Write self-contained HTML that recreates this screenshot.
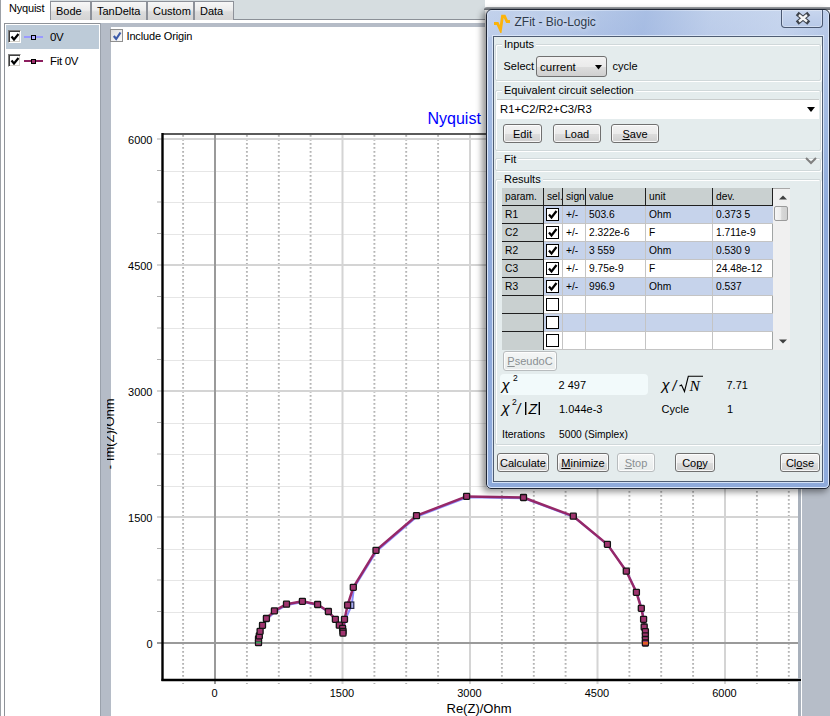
<!DOCTYPE html>
<html><head><meta charset="utf-8">
<style>
*{box-sizing:border-box}
html,body{margin:0;padding:0}
body{width:830px;height:716px;overflow:hidden;position:relative;background:#fff;font-family:"Liberation Sans",sans-serif;font-size:11px;color:#000}
.a{position:absolute}
.tab{position:absolute;top:1px;height:19px;border:1px solid #8d9199;border-bottom:none;background:linear-gradient(#f7f7f7 0%,#ececec 45%,#dcdcdc 55%,#d4d4d4 100%);}
.tab span{position:absolute;top:3px;left:5px;font-size:11px}
.tl{font-size:11px;fill:#000;font-family:"Liberation Sans",sans-serif}
.ax{font-size:13px;fill:#000;font-family:"Liberation Sans",sans-serif}
.ttl{font-size:16px;fill:#0000ff;font-family:"Liberation Sans",sans-serif}
.cb{position:absolute;width:13px;height:13px;background:#fff;border:1px solid;border-color:#808080 #fff #fff #808080;box-shadow:inset 1px 1px 0 #404040, inset -1px -1px 0 #d4d0c8}
.btn{position:absolute;height:19px;border:1px solid #707070;border-radius:3px;background:linear-gradient(#f2f2f2 0%,#ebebeb 50%,#dddddd 51%,#cfcfcf 100%);box-shadow:inset 0 0 0 1px rgba(255,255,255,0.8);text-align:center;font-size:11px;line-height:18px}
.grp{position:absolute;border:1px solid #d0d8da;border-radius:2px;box-shadow:1px 1px 0 #fff inset, 1px 1px 0 #fff}
.glab{position:absolute;background:#e4eced;padding:0 2px;font-size:11px;line-height:12px}
table.res{position:absolute;border-collapse:collapse;font-size:11px}
</style></head><body>

<!-- left edge -->
<div class="a" style="left:0;top:0;width:1px;height:716px;background:#9ca0a6"></div>

<!-- tab strip -->
<div class="a" style="left:50px;top:0;width:435px;height:19px;background:#d6dde0"></div>
<div class="a" style="left:50px;top:19px;width:435px;height:1px;background:#8b9097"></div>
<div class="tab" style="left:50px;width:41px"><span>Bode</span></div>
<div class="tab" style="left:91px;width:56px"><span>TanDelta</span></div>
<div class="tab" style="left:147px;width:47px"><span>Custom</span></div>
<div class="tab" style="left:194px;width:40px"><span>Data</span></div>
<div class="a" style="left:9px;top:2px;font-size:11px;letter-spacing:-0.2px">Nyquist</div>

<!-- listbox -->
<div class="a" style="left:4px;top:23px;width:97px;height:700px;border:1px solid #8e9298;border-right:none;background:#fff"></div>
<div class="a" style="left:6px;top:25px;width:93px;height:24px;background:#bdcbd8"></div>
<div class="cb" style="left:8px;top:30px"></div>
<div class="cb" style="left:8px;top:54px"></div>
<svg class="a" style="left:10px;top:32px" width="10" height="10"><path d="M1.5 4.5 L4 7.5 L8.5 2" fill="none" stroke="#000" stroke-width="2.2"/></svg>
<svg class="a" style="left:10px;top:56px" width="10" height="10"><path d="M1.5 4.5 L4 7.5 L8.5 2" fill="none" stroke="#000" stroke-width="2.2"/></svg>
<div class="a" style="left:24px;top:36px;width:19px;height:2px;background:#9a9aff"></div>
<div class="a" style="left:31px;top:35px;width:5px;height:5px;border:1px solid #000;background:#b0b0ff"></div>
<div class="a" style="left:24px;top:60px;width:19px;height:2px;background:#8c1e5e"></div>
<div class="a" style="left:31px;top:59px;width:5px;height:5px;border:1px solid #000;background:#a0306e"></div>
<div class="a" style="left:50px;top:31px;font-size:11.5px;letter-spacing:-0.3px">0V</div>
<div class="a" style="left:50px;top:55px;font-size:11.5px;letter-spacing:-0.3px">Fit 0V</div>

<!-- strips -->
<div class="a" style="left:100px;top:23px;width:11px;height:693px;background:#b5bcc7;border-left:1px solid #9aa1ab"></div>
<div class="a" style="left:111px;top:23px;width:374px;height:4px;background:#b5bcc7"></div>
<svg class="a" style="left:0;top:0" width="830" height="716" viewBox="0 0 830 716">
<line x1="183.1" y1="135" x2="183.1" y2="684" stroke="#b4b4b4" stroke-width="1.9" stroke-dasharray="1.7 2.3"/>
<line x1="246.9" y1="135" x2="246.9" y2="684" stroke="#b4b4b4" stroke-width="1.9" stroke-dasharray="1.7 2.3"/>
<line x1="278.8" y1="135" x2="278.8" y2="684" stroke="#b4b4b4" stroke-width="1.9" stroke-dasharray="1.7 2.3"/>
<line x1="310.6" y1="135" x2="310.6" y2="684" stroke="#b4b4b4" stroke-width="1.9" stroke-dasharray="1.7 2.3"/>
<line x1="374.4" y1="135" x2="374.4" y2="684" stroke="#b4b4b4" stroke-width="1.9" stroke-dasharray="1.7 2.3"/>
<line x1="406.2" y1="135" x2="406.2" y2="684" stroke="#b4b4b4" stroke-width="1.9" stroke-dasharray="1.7 2.3"/>
<line x1="438.1" y1="135" x2="438.1" y2="684" stroke="#b4b4b4" stroke-width="1.9" stroke-dasharray="1.7 2.3"/>
<line x1="501.9" y1="135" x2="501.9" y2="684" stroke="#b4b4b4" stroke-width="1.9" stroke-dasharray="1.7 2.3"/>
<line x1="533.8" y1="135" x2="533.8" y2="684" stroke="#b4b4b4" stroke-width="1.9" stroke-dasharray="1.7 2.3"/>
<line x1="565.6" y1="135" x2="565.6" y2="684" stroke="#b4b4b4" stroke-width="1.9" stroke-dasharray="1.7 2.3"/>
<line x1="629.4" y1="135" x2="629.4" y2="684" stroke="#b4b4b4" stroke-width="1.9" stroke-dasharray="1.7 2.3"/>
<line x1="661.2" y1="135" x2="661.2" y2="684" stroke="#b4b4b4" stroke-width="1.9" stroke-dasharray="1.7 2.3"/>
<line x1="693.1" y1="135" x2="693.1" y2="684" stroke="#b4b4b4" stroke-width="1.9" stroke-dasharray="1.7 2.3"/>
<line x1="756.9" y1="135" x2="756.9" y2="684" stroke="#b4b4b4" stroke-width="1.9" stroke-dasharray="1.7 2.3"/>
<line x1="788.8" y1="135" x2="788.8" y2="684" stroke="#b4b4b4" stroke-width="1.9" stroke-dasharray="1.7 2.3"/>
<line x1="162.5" y1="612.5" x2="800" y2="612.5" stroke="#cccccc" stroke-width="1" stroke-dasharray="1 1"/>
<line x1="157" y1="611.5" x2="161" y2="611.5" stroke="#b0b0b0" stroke-width="1"/>
<line x1="162.5" y1="580.5" x2="800" y2="580.5" stroke="#cccccc" stroke-width="1" stroke-dasharray="1 1"/>
<line x1="157" y1="580.0" x2="161" y2="580.0" stroke="#b0b0b0" stroke-width="1"/>
<line x1="162.5" y1="549.5" x2="800" y2="549.5" stroke="#cccccc" stroke-width="1" stroke-dasharray="1 1"/>
<line x1="157" y1="548.5" x2="161" y2="548.5" stroke="#b0b0b0" stroke-width="1"/>
<line x1="162.5" y1="486.5" x2="800" y2="486.5" stroke="#cccccc" stroke-width="1" stroke-dasharray="1 1"/>
<line x1="157" y1="485.5" x2="161" y2="485.5" stroke="#b0b0b0" stroke-width="1"/>
<line x1="162.5" y1="454.5" x2="800" y2="454.5" stroke="#cccccc" stroke-width="1" stroke-dasharray="1 1"/>
<line x1="157" y1="454.0" x2="161" y2="454.0" stroke="#b0b0b0" stroke-width="1"/>
<line x1="162.5" y1="423.5" x2="800" y2="423.5" stroke="#cccccc" stroke-width="1" stroke-dasharray="1 1"/>
<line x1="157" y1="422.5" x2="161" y2="422.5" stroke="#b0b0b0" stroke-width="1"/>
<line x1="162.5" y1="360.5" x2="800" y2="360.5" stroke="#cccccc" stroke-width="1" stroke-dasharray="1 1"/>
<line x1="157" y1="359.5" x2="161" y2="359.5" stroke="#b0b0b0" stroke-width="1"/>
<line x1="162.5" y1="328.5" x2="800" y2="328.5" stroke="#cccccc" stroke-width="1" stroke-dasharray="1 1"/>
<line x1="157" y1="328.0" x2="161" y2="328.0" stroke="#b0b0b0" stroke-width="1"/>
<line x1="162.5" y1="297.5" x2="800" y2="297.5" stroke="#cccccc" stroke-width="1" stroke-dasharray="1 1"/>
<line x1="157" y1="296.5" x2="161" y2="296.5" stroke="#b0b0b0" stroke-width="1"/>
<line x1="162.5" y1="234.5" x2="800" y2="234.5" stroke="#cccccc" stroke-width="1" stroke-dasharray="1 1"/>
<line x1="157" y1="233.5" x2="161" y2="233.5" stroke="#b0b0b0" stroke-width="1"/>
<line x1="162.5" y1="202.5" x2="800" y2="202.5" stroke="#cccccc" stroke-width="1" stroke-dasharray="1 1"/>
<line x1="157" y1="202.0" x2="161" y2="202.0" stroke="#b0b0b0" stroke-width="1"/>
<line x1="162.5" y1="171.5" x2="800" y2="171.5" stroke="#cccccc" stroke-width="1" stroke-dasharray="1 1"/>
<line x1="157" y1="170.5" x2="161" y2="170.5" stroke="#b0b0b0" stroke-width="1"/>
<line x1="342.5" y1="134" x2="342.5" y2="684" stroke="#d4d4d4" stroke-width="2"/>
<line x1="470.0" y1="134" x2="470.0" y2="684" stroke="#d4d4d4" stroke-width="2"/>
<line x1="597.5" y1="134" x2="597.5" y2="684" stroke="#d4d4d4" stroke-width="2"/>
<line x1="725.0" y1="134" x2="725.0" y2="684" stroke="#d4d4d4" stroke-width="2"/>
<line x1="157" y1="517.0" x2="800" y2="517.0" stroke="#d4d4d4" stroke-width="2"/>
<line x1="157" y1="391.0" x2="800" y2="391.0" stroke="#d4d4d4" stroke-width="2"/>
<line x1="157" y1="265.0" x2="800" y2="265.0" stroke="#d4d4d4" stroke-width="2"/>
<line x1="157" y1="139.0" x2="800" y2="139.0" stroke="#d4d4d4" stroke-width="2"/>
<line x1="215.0" y1="134" x2="215.0" y2="684" stroke="#9a9a9a" stroke-width="2"/>
<line x1="157" y1="643.0" x2="800" y2="643.0" stroke="#9a9a9a" stroke-width="2"/>
<line x1="162.5" y1="134" x2="800" y2="134" stroke="#5a5a5a" stroke-width="2"/>
<line x1="162.5" y1="133" x2="162.5" y2="681" stroke="#000" stroke-width="2.4"/>
<line x1="161.5" y1="680" x2="800" y2="680" stroke="#000" stroke-width="2.4"/>
<text x="152.5" y="648.0" text-anchor="end" class="tl">0</text>
<text x="214.5" y="697" text-anchor="middle" class="tl">0</text>
<text x="152.5" y="522.0" text-anchor="end" class="tl">1500</text>
<text x="342.0" y="697" text-anchor="middle" class="tl">1500</text>
<text x="152.5" y="396.0" text-anchor="end" class="tl">3000</text>
<text x="469.5" y="697" text-anchor="middle" class="tl">3000</text>
<text x="152.5" y="270.0" text-anchor="end" class="tl">4500</text>
<text x="597.0" y="697" text-anchor="middle" class="tl">4500</text>
<text x="152.5" y="144.0" text-anchor="end" class="tl">6000</text>
<text x="724.5" y="697" text-anchor="middle" class="tl">6000</text>
<text x="479" y="712.8" text-anchor="middle" class="ax">Re(Z)/Ohm</text>
<text x="427.5" y="123.6" class="ttl">Nyquist</text>
<polyline fill="none" stroke="#8c8cff" stroke-width="2" points="259.1,643.5 259.1,639.8 259.9,636.6 260.7,632.2 263.1,626.2 267.0,619.3 275.0,611.7 287.1,605.0 303.0,602.1 318.2,605.3 329.0,612.3 336.0,620.2 339.9,626.0 343.2,629.2 343.6,632.1 343.6,633.9 345.1,620.2 351.7,605.2 353.9,588.1 376.6,551.2 417.1,516.5 467.2,497.2 524.1,498.3 573.9,517.0 608.0,545.2 626.9,572.0 637.0,593.1 641.9,609.2 644.2,620.1 644.8,627.8 646.0,632.5 646.0,636.6 646.0,640.3 646.0,643.8"/>
<rect x="347.4" y="602" width="6.4" height="6.4" fill="#a8acf4" stroke="#28284a" stroke-width="1.2"/>
<polyline fill="none" stroke="#962868" stroke-width="2.5" stroke-linejoin="round" points="258.5,642.7 258.5,639.0 259.3,635.8 260.1,631.4 262.5,625.4 266.4,618.5 274.4,610.9 286.5,604.2 302.4,601.3 317.6,604.5 328.4,611.5 335.4,619.4 339.3,625.2 342.6,628.4 343.0,631.3 343.0,633.1 344.5,619.4 347.6,605.2 353.3,587.3 376.0,550.4 416.5,515.7 466.6,496.4 523.5,497.5 573.3,516.2 607.4,544.4 626.3,571.2 636.4,592.3 641.3,608.4 643.6,619.3 644.2,627.0 645.4,631.7 645.4,635.8 645.4,639.5 645.4,643.0"/>
<rect x="255.5" y="639.7" width="6" height="6" fill="#a0346f" stroke="#141414" stroke-width="1.3" rx="0.8"/>
<rect x="255.5" y="636.0" width="6" height="6" fill="#a0346f" stroke="#141414" stroke-width="1.3" rx="0.8"/>
<rect x="256.3" y="632.8" width="6" height="6" fill="#a0346f" stroke="#141414" stroke-width="1.3" rx="0.8"/>
<rect x="257.1" y="628.4" width="6" height="6" fill="#a0346f" stroke="#141414" stroke-width="1.3" rx="0.8"/>
<rect x="259.5" y="622.4" width="6" height="6" fill="#a0346f" stroke="#141414" stroke-width="1.3" rx="0.8"/>
<rect x="263.4" y="615.5" width="6" height="6" fill="#a0346f" stroke="#141414" stroke-width="1.3" rx="0.8"/>
<rect x="271.4" y="607.9" width="6" height="6" fill="#a0346f" stroke="#141414" stroke-width="1.3" rx="0.8"/>
<rect x="283.5" y="601.2" width="6" height="6" fill="#a0346f" stroke="#141414" stroke-width="1.3" rx="0.8"/>
<rect x="299.4" y="598.3" width="6" height="6" fill="#a0346f" stroke="#141414" stroke-width="1.3" rx="0.8"/>
<rect x="314.6" y="601.5" width="6" height="6" fill="#a0346f" stroke="#141414" stroke-width="1.3" rx="0.8"/>
<rect x="325.4" y="608.5" width="6" height="6" fill="#a0346f" stroke="#141414" stroke-width="1.3" rx="0.8"/>
<rect x="332.4" y="616.4" width="6" height="6" fill="#a0346f" stroke="#141414" stroke-width="1.3" rx="0.8"/>
<rect x="336.3" y="622.2" width="6" height="6" fill="#a0346f" stroke="#141414" stroke-width="1.3" rx="0.8"/>
<rect x="339.6" y="625.4" width="6" height="6" fill="#a0346f" stroke="#141414" stroke-width="1.3" rx="0.8"/>
<rect x="340.0" y="628.3" width="6" height="6" fill="#a0346f" stroke="#141414" stroke-width="1.3" rx="0.8"/>
<rect x="340.0" y="630.1" width="6" height="6" fill="#a0346f" stroke="#141414" stroke-width="1.3" rx="0.8"/>
<rect x="341.5" y="616.4" width="6" height="6" fill="#a0346f" stroke="#141414" stroke-width="1.3" rx="0.8"/>
<rect x="344.6" y="602.2" width="6" height="6" fill="#a0346f" stroke="#141414" stroke-width="1.3" rx="0.8"/>
<rect x="350.3" y="584.3" width="6" height="6" fill="#a0346f" stroke="#141414" stroke-width="1.3" rx="0.8"/>
<rect x="373.0" y="547.4" width="6" height="6" fill="#a0346f" stroke="#141414" stroke-width="1.3" rx="0.8"/>
<rect x="413.5" y="512.7" width="6" height="6" fill="#a0346f" stroke="#141414" stroke-width="1.3" rx="0.8"/>
<rect x="463.6" y="493.4" width="6" height="6" fill="#a0346f" stroke="#141414" stroke-width="1.3" rx="0.8"/>
<rect x="520.5" y="494.5" width="6" height="6" fill="#a0346f" stroke="#141414" stroke-width="1.3" rx="0.8"/>
<rect x="570.3" y="513.2" width="6" height="6" fill="#a0346f" stroke="#141414" stroke-width="1.3" rx="0.8"/>
<rect x="604.4" y="541.4" width="6" height="6" fill="#a0346f" stroke="#141414" stroke-width="1.3" rx="0.8"/>
<rect x="623.3" y="568.2" width="6" height="6" fill="#a0346f" stroke="#141414" stroke-width="1.3" rx="0.8"/>
<rect x="633.4" y="589.3" width="6" height="6" fill="#a0346f" stroke="#141414" stroke-width="1.3" rx="0.8"/>
<rect x="638.3" y="605.4" width="6" height="6" fill="#a0346f" stroke="#141414" stroke-width="1.3" rx="0.8"/>
<rect x="640.6" y="616.3" width="6" height="6" fill="#a0346f" stroke="#141414" stroke-width="1.3" rx="0.8"/>
<rect x="641.2" y="624.0" width="6" height="6" fill="#a0346f" stroke="#141414" stroke-width="1.3" rx="0.8"/>
<rect x="642.4" y="628.7" width="6" height="6" fill="#a0346f" stroke="#141414" stroke-width="1.3" rx="0.8"/>
<rect x="642.4" y="632.8" width="6" height="6" fill="#a0346f" stroke="#141414" stroke-width="1.3" rx="0.8"/>
<rect x="642.4" y="636.5" width="6" height="6" fill="#a0346f" stroke="#141414" stroke-width="1.3" rx="0.8"/>
<rect x="642.4" y="640.0" width="6" height="6" fill="#a0346f" stroke="#141414" stroke-width="1.3" rx="0.8"/>
<rect x="256" y="641.5" width="5" height="2" fill="#3a9a5a"/>
<rect x="643" y="642" width="5" height="2.5" fill="#e06020"/>
</svg>

<!-- y axis title -->
<svg class="a" style="left:107px;top:380px" width="20" height="110" viewBox="107 380 20 110">
<text transform="translate(113.6,433.8) rotate(-90)" text-anchor="middle" font-family="Liberation Sans" font-size="13" fill="#000">- Im(Z)/Ohm</text>
</svg>

<!-- include origin -->
<div class="cb" style="left:110px;top:29px;border-color:#8f8f8f;box-shadow:none;background:linear-gradient(135deg,#dcdcdc,#fafafa)"></div>
<svg class="a" style="left:112px;top:31px" width="10" height="10"><path d="M1.8 5 L4.2 8 L8.5 1.5" fill="none" stroke="#3c5aa8" stroke-width="2.2"/></svg>
<div class="a" style="left:126.5px;top:30px;font-size:11px;letter-spacing:-0.15px">Include Origin</div>

<!-- right strips on top of chart -->
<div class="a" style="left:798px;top:23px;width:3px;height:693px;background:#a9b1bc"></div>
<div class="a" style="left:801px;top:23px;width:1px;height:693px;background:#fff"></div>
<div class="a" style="left:802px;top:23px;width:28px;height:693px;background:#b6bdc8"></div>
<div class="a" style="left:796px;top:678.8px;width:5px;height:2.4px;background:#000"></div>

<!-- DIALOG -->
<div class="a" style="left:486px;top:9px;width:344px;height:480px;border-radius:6px 6px 5px 5px;box-shadow:-3px 2px 6px 1px rgba(0,0,0,0.42);"></div>
<div class="a" style="left:484px;top:7px;width:346px;height:3px;border-radius:5px 0 0 0;background:linear-gradient(#9a9ea2,#5c6066)"></div>
<div class="a" style="left:486px;top:9px;width:344px;height:480px;border:1px solid #1e2533;border-radius:6px 6px 5px 5px;background:linear-gradient(180deg,#bccde9 0px,#b4c6e7 30px,#9fb8e0 120px,#8eaadb 200px,#8eaadb 100%);overflow:hidden">
  <div class="a" style="left:0;top:0;width:342px;height:478px;border:1px solid rgba(230,238,252,0.85);border-radius:5px 5px 4px 4px"></div>
  <div class="a" style="left:0;top:0;width:342px;height:27px;background:linear-gradient(100deg,rgba(200,214,238,0.5) 0%,rgba(170,190,228,0.0) 20%,rgba(150,176,222,0.5) 46%,rgba(200,214,238,0.3) 65%,rgba(210,222,242,0.5) 85%,rgba(180,200,232,0.2) 100%)"></div>
</div>
<div class="a" style="left:492px;top:35px;width:332px;height:448px;border:1px solid rgba(220,232,250,0.9)"></div>
<!-- title icon -->
<svg class="a" style="left:492px;top:13px" width="20" height="20" viewBox="0 0 20 20"><path d="M2 10.5 L5.5 10.5 L8.5 17 L10.5 3.2 L12.5 3.2 L15 8.5 L18 8.5" fill="none" stroke="#fbb30a" stroke-width="2.8" stroke-linejoin="miter" stroke-linecap="butt"/></svg>
<div class="a" style="left:514.5px;top:15px;font-size:12px;color:#2e3a4c;text-shadow:0 0 6px rgba(255,255,255,0.9)">ZFit - Bio-Logic</div>
<!-- close btn -->
<div class="a" style="left:781px;top:10px;width:42px;height:18px;border:1px solid #4a5872;border-top:none;border-radius:0 0 4px 4px;background:linear-gradient(#c8d6ee,#b8c9e8);box-shadow:inset 0 0 0 1px rgba(255,255,255,0.35)"></div>
<svg class="a" style="left:795px;top:11px" width="16" height="14" viewBox="0 0 16 14"><path d="M4 4 L12 10.5 M12 4 L4 10.5" stroke="#3e434c" stroke-width="4.6" stroke-linecap="square"/><path d="M4 4 L12 10.5 M12 4 L4 10.5" stroke="#f6f6f6" stroke-width="2.4" stroke-linecap="butt"/></svg>

<!-- client -->
<div class="a" style="left:493px;top:36px;width:330px;height:446px;border:1px solid #4f5d73;background:#e4eced"></div>

<!-- groups -->
<div class="grp" style="left:495px;top:44px;width:326px;height:37px"></div>
<div class="glab" style="left:502px;top:38px">Inputs</div>
<div class="a" style="left:503.5px;top:60px">Select</div>
<div class="a" style="left:536px;top:56px;width:71px;height:21px;border:1px solid #707070;border-radius:3px;background:linear-gradient(#f2f2f2 0%,#ebebeb 50%,#dddddd 51%,#cfcfcf 100%)"></div>
<div class="a" style="left:540px;top:61px;font-size:11.5px">current</div>
<svg class="a" style="left:595px;top:65px" width="7" height="5"><path d="M0 0 L7 0 L3.5 4.5 Z" fill="#000"/></svg>
<div class="a" style="left:612.5px;top:60px">cycle</div>

<div class="grp" style="left:495px;top:90px;width:326px;height:61px"></div>
<div class="glab" style="left:502px;top:84px">Equivalent circuit selection</div>
<div class="a" style="left:497px;top:99px;width:322px;height:20px;background:#fff;border-top:1px solid #c8cccc"></div>
<div class="a" style="left:500px;top:103px;font-size:11.3px">R1+C2/R2+C3/R3</div>
<svg class="a" style="left:807px;top:107px" width="8" height="5"><path d="M0 0 L8 0 L4 5 Z" fill="#000"/></svg>
<div class="btn" style="left:503px;top:124px;width:39px">Edit</div>
<div class="btn" style="left:553px;top:124px;width:48px">Load</div>
<div class="btn" style="left:611px;top:124px;width:48px"><u>S</u>ave</div>

<div class="grp" style="left:495px;top:158px;width:326px;height:13px"></div>
<div class="glab" style="left:502px;top:153px">Fit</div>
<svg class="a" style="left:805px;top:157px" width="12" height="8"><path d="M1 1 L6 6 L11 1" fill="none" stroke="#808080" stroke-width="2"/></svg>

<div class="grp" style="left:495px;top:179px;width:326px;height:266px"></div>
<div class="glab" style="left:502px;top:173px">Results</div>

<div class="a" style="left:502px;top:188px;width:271px;height:162px;background:#fff;border:1px solid #a0a4a4"></div>
<div class="a" style="left:502px;top:188px;width:271px;height:18px;background:#c9d0d0"></div>
<div class="a" style="left:502px;top:188px;width:42px;height:162px;background:#c9d0d0"></div>
<div class="a" style="left:544px;top:206px;width:229px;height:18px;background:#c6d3eb"></div>
<div class="a" style="left:502px;top:205px;width:42px;height:1px;background:#202020"></div>
<div class="a" style="left:544px;top:223px;width:229px;height:1px;background:#c4c4c4"></div>
<div class="a" style="left:546px;top:208px;width:13px;height:13px;border:1px solid #000;background:#fff"></div>
<svg class="a" style="left:547px;top:209px" width="11" height="11"><path d="M2 5.5 L4.5 8.5 L9.5 2" fill="none" stroke="#000" stroke-width="2.2"/></svg>
<div class="a" style="left:504.5px;top:207.5px;font-size:11.5px;transform:scaleX(0.89);transform-origin:0 0;white-space:nowrap">R1</div>
<div class="a" style="left:565.5px;top:207.5px;font-size:11.5px;transform:scaleX(0.89);transform-origin:0 0;white-space:nowrap">+/-</div>
<div class="a" style="left:588.5px;top:207.5px;font-size:11.5px;transform:scaleX(0.89);transform-origin:0 0;white-space:nowrap">503.6</div>
<div class="a" style="left:648.5px;top:207.5px;font-size:11.5px;transform:scaleX(0.89);transform-origin:0 0;white-space:nowrap">Ohm</div>
<div class="a" style="left:715.5px;top:207.5px;font-size:11.5px;transform:scaleX(0.89);transform-origin:0 0;white-space:nowrap">0.373 5</div>
<div class="a" style="left:502px;top:223px;width:42px;height:1px;background:#202020"></div>
<div class="a" style="left:544px;top:241px;width:229px;height:1px;background:#c4c4c4"></div>
<div class="a" style="left:546px;top:226px;width:13px;height:13px;border:1px solid #000;background:#fff"></div>
<svg class="a" style="left:547px;top:227px" width="11" height="11"><path d="M2 5.5 L4.5 8.5 L9.5 2" fill="none" stroke="#000" stroke-width="2.2"/></svg>
<div class="a" style="left:504.5px;top:225.5px;font-size:11.5px;transform:scaleX(0.89);transform-origin:0 0;white-space:nowrap">C2</div>
<div class="a" style="left:565.5px;top:225.5px;font-size:11.5px;transform:scaleX(0.89);transform-origin:0 0;white-space:nowrap">+/-</div>
<div class="a" style="left:588.5px;top:225.5px;font-size:11.5px;transform:scaleX(0.89);transform-origin:0 0;white-space:nowrap">2.322e-6</div>
<div class="a" style="left:648.5px;top:225.5px;font-size:11.5px;transform:scaleX(0.89);transform-origin:0 0;white-space:nowrap">F</div>
<div class="a" style="left:715.5px;top:225.5px;font-size:11.5px;transform:scaleX(0.89);transform-origin:0 0;white-space:nowrap">1.711e-9</div>
<div class="a" style="left:544px;top:242px;width:229px;height:18px;background:#c6d3eb"></div>
<div class="a" style="left:502px;top:241px;width:42px;height:1px;background:#202020"></div>
<div class="a" style="left:544px;top:259px;width:229px;height:1px;background:#c4c4c4"></div>
<div class="a" style="left:546px;top:244px;width:13px;height:13px;border:1px solid #000;background:#fff"></div>
<svg class="a" style="left:547px;top:245px" width="11" height="11"><path d="M2 5.5 L4.5 8.5 L9.5 2" fill="none" stroke="#000" stroke-width="2.2"/></svg>
<div class="a" style="left:504.5px;top:243.5px;font-size:11.5px;transform:scaleX(0.89);transform-origin:0 0;white-space:nowrap">R2</div>
<div class="a" style="left:565.5px;top:243.5px;font-size:11.5px;transform:scaleX(0.89);transform-origin:0 0;white-space:nowrap">+/-</div>
<div class="a" style="left:588.5px;top:243.5px;font-size:11.5px;transform:scaleX(0.89);transform-origin:0 0;white-space:nowrap">3 559</div>
<div class="a" style="left:648.5px;top:243.5px;font-size:11.5px;transform:scaleX(0.89);transform-origin:0 0;white-space:nowrap">Ohm</div>
<div class="a" style="left:715.5px;top:243.5px;font-size:11.5px;transform:scaleX(0.89);transform-origin:0 0;white-space:nowrap">0.530 9</div>
<div class="a" style="left:502px;top:259px;width:42px;height:1px;background:#202020"></div>
<div class="a" style="left:544px;top:277px;width:229px;height:1px;background:#c4c4c4"></div>
<div class="a" style="left:546px;top:262px;width:13px;height:13px;border:1px solid #000;background:#fff"></div>
<svg class="a" style="left:547px;top:263px" width="11" height="11"><path d="M2 5.5 L4.5 8.5 L9.5 2" fill="none" stroke="#000" stroke-width="2.2"/></svg>
<div class="a" style="left:504.5px;top:261.5px;font-size:11.5px;transform:scaleX(0.89);transform-origin:0 0;white-space:nowrap">C3</div>
<div class="a" style="left:565.5px;top:261.5px;font-size:11.5px;transform:scaleX(0.89);transform-origin:0 0;white-space:nowrap">+/-</div>
<div class="a" style="left:588.5px;top:261.5px;font-size:11.5px;transform:scaleX(0.89);transform-origin:0 0;white-space:nowrap">9.75e-9</div>
<div class="a" style="left:648.5px;top:261.5px;font-size:11.5px;transform:scaleX(0.89);transform-origin:0 0;white-space:nowrap">F</div>
<div class="a" style="left:715.5px;top:261.5px;font-size:11.5px;transform:scaleX(0.89);transform-origin:0 0;white-space:nowrap">24.48e-12</div>
<div class="a" style="left:544px;top:278px;width:229px;height:18px;background:#c6d3eb"></div>
<div class="a" style="left:502px;top:277px;width:42px;height:1px;background:#202020"></div>
<div class="a" style="left:544px;top:295px;width:229px;height:1px;background:#c4c4c4"></div>
<div class="a" style="left:546px;top:280px;width:13px;height:13px;border:1px solid #000;background:#fff"></div>
<svg class="a" style="left:547px;top:281px" width="11" height="11"><path d="M2 5.5 L4.5 8.5 L9.5 2" fill="none" stroke="#000" stroke-width="2.2"/></svg>
<div class="a" style="left:504.5px;top:279.5px;font-size:11.5px;transform:scaleX(0.89);transform-origin:0 0;white-space:nowrap">R3</div>
<div class="a" style="left:565.5px;top:279.5px;font-size:11.5px;transform:scaleX(0.89);transform-origin:0 0;white-space:nowrap">+/-</div>
<div class="a" style="left:588.5px;top:279.5px;font-size:11.5px;transform:scaleX(0.89);transform-origin:0 0;white-space:nowrap">996.9</div>
<div class="a" style="left:648.5px;top:279.5px;font-size:11.5px;transform:scaleX(0.89);transform-origin:0 0;white-space:nowrap">Ohm</div>
<div class="a" style="left:715.5px;top:279.5px;font-size:11.5px;transform:scaleX(0.89);transform-origin:0 0;white-space:nowrap">0.537</div>
<div class="a" style="left:502px;top:295px;width:42px;height:1px;background:#202020"></div>
<div class="a" style="left:544px;top:313px;width:229px;height:1px;background:#c4c4c4"></div>
<div class="a" style="left:546px;top:298px;width:13px;height:13px;border:1px solid #000;background:#fff"></div>
<div class="a" style="left:544px;top:314px;width:229px;height:18px;background:#c6d3eb"></div>
<div class="a" style="left:502px;top:313px;width:42px;height:1px;background:#202020"></div>
<div class="a" style="left:544px;top:331px;width:229px;height:1px;background:#c4c4c4"></div>
<div class="a" style="left:546px;top:316px;width:13px;height:13px;border:1px solid #000;background:#fff"></div>
<div class="a" style="left:502px;top:331px;width:42px;height:1px;background:#202020"></div>
<div class="a" style="left:544px;top:349px;width:229px;height:1px;background:#c4c4c4"></div>
<div class="a" style="left:546px;top:334px;width:13px;height:13px;border:1px solid #000;background:#fff"></div>
<div class="a" style="left:502px;top:205px;width:271px;height:1px;background:#202020"></div>
<div class="a" style="left:504.5px;top:190px;font-size:11.5px;transform:scaleX(0.89);transform-origin:0 0;white-space:nowrap">param.</div>
<div class="a" style="left:546.5px;top:190px;font-size:11.5px;transform:scaleX(0.89);transform-origin:0 0;white-space:nowrap">sel.</div>
<div class="a" style="left:565.5px;top:190px;font-size:11.5px;transform:scaleX(0.89);transform-origin:0 0;white-space:nowrap">sign</div>
<div class="a" style="left:588.5px;top:190px;font-size:11.5px;transform:scaleX(0.89);transform-origin:0 0;white-space:nowrap">value</div>
<div class="a" style="left:648.5px;top:190px;font-size:11.5px;transform:scaleX(0.89);transform-origin:0 0;white-space:nowrap">unit</div>
<div class="a" style="left:715.5px;top:190px;font-size:11.5px;transform:scaleX(0.89);transform-origin:0 0;white-space:nowrap">dev.</div>
<div class="a" style="left:543px;top:188px;width:1px;height:18px;background:#202020"></div>
<div class="a" style="left:543px;top:206px;width:1px;height:144px;background:#202020"></div>
<div class="a" style="left:562px;top:188px;width:1px;height:18px;background:#202020"></div>
<div class="a" style="left:562px;top:206px;width:1px;height:144px;background:#c4c4c4"></div>
<div class="a" style="left:585px;top:188px;width:1px;height:18px;background:#202020"></div>
<div class="a" style="left:585px;top:206px;width:1px;height:144px;background:#c4c4c4"></div>
<div class="a" style="left:645px;top:188px;width:1px;height:18px;background:#202020"></div>
<div class="a" style="left:645px;top:206px;width:1px;height:144px;background:#c4c4c4"></div>
<div class="a" style="left:712px;top:188px;width:1px;height:18px;background:#202020"></div>
<div class="a" style="left:712px;top:206px;width:1px;height:144px;background:#c4c4c4"></div>
<div class="a" style="left:773px;top:188px;width:17px;height:162px;background:#f0f0f0;border-top:1px solid #a8a8a8"></div>
<div class="a" style="left:772px;top:188px;width:1px;height:18px;background:#202020"></div>
<svg class="a" style="left:778.5px;top:195px" width="8" height="5"><path d="M0 4.5 L8 4.5 L4 0.5 Z" fill="#404040"/></svg>
<div class="a" style="left:774px;top:206px;width:14px;height:15px;border:1px solid #9a9a9a;border-radius:2px;background:linear-gradient(90deg,#f6f6f6 0%,#ececec 50%,#d8d8d8 55%,#d0d0d0 100%)"></div>
<svg class="a" style="left:778.5px;top:339px" width="8" height="5"><path d="M0 0.5 L8 0.5 L4 4.5 Z" fill="#404040"/></svg>

<div class="btn" style="left:503px;top:351px;width:54px;height:20px;border-color:#b8bcbe;background:linear-gradient(#f4f6f6,#e8ecec);color:#8a8f92;line-height:18px"><u>P</u>seudoC</div>

<div class="a" style="left:500px;top:373.5px;width:148px;height:21px;background:#f2fafb;border-radius:4px"></div>
<svg class="a" style="left:0;top:0;overflow:visible" width="830" height="716">
<text x="501.5" y="389.5" font-family="Liberation Sans" font-style="italic" font-size="15" fill="#000">&#967;</text>
<text x="513" y="381" font-family="Liberation Sans" font-size="8.5" fill="#000">2</text>
<text x="501.5" y="413" font-family="Liberation Sans" font-style="italic" font-size="15" fill="#000">&#967;</text>
<text x="512" y="404.5" font-family="Liberation Sans" font-size="8.5" fill="#000">2</text>
<text x="516.5" y="414" font-family="Liberation Sans" font-style="italic" font-size="14" fill="#000">/</text>
<rect x="525" y="402" width="1.4" height="13" fill="#000"/>
<text x="528.5" y="414" font-family="Liberation Sans" font-style="italic" font-size="14" fill="#000">Z</text>
<rect x="538.6" y="402" width="1.4" height="13" fill="#000"/>
<text x="661.5" y="390" font-family="Liberation Sans" font-style="italic" font-size="15" fill="#000">&#967;</text>
<text x="672.5" y="391" font-family="Liberation Sans" font-style="italic" font-size="14" fill="#000">/</text>
<path d="M679.5 386 L681.5 385 L684.5 391.5 L688.3 376.3 L703 376.3" fill="none" stroke="#000" stroke-width="1.1"/>
<text x="689.5" y="391" font-family="Liberation Serif" font-style="italic" font-size="15.5" fill="#000">N</text>
</svg>
<div class="a" style="left:558.5px;top:379px">2 497</div>
<div class="a" style="left:726.5px;top:379px">7.71</div>
<div class="a" style="left:559px;top:403px">1.044e-3</div>
<div class="a" style="left:661.5px;top:403px">Cycle</div>
<div class="a" style="left:727px;top:403px">1</div>

<div class="a" style="left:502px;top:428px;transform:scaleX(0.95);transform-origin:0 0">Iterations</div>
<div class="a" style="left:559px;top:428px;transform:scaleX(0.93);transform-origin:0 0">5000 (Simplex)</div>

<div class="btn" style="left:497px;top:453px;width:52px">Calculate</div>
<div class="btn" style="left:557px;top:453px;width:52px"><u>M</u>inimize</div>
<div class="btn" style="left:617px;top:453px;width:38px;border-color:#b8bcbe;background:linear-gradient(#f4f6f6,#e8ecec);color:#8a8f92"><u>S</u>top</div>
<div class="btn" style="left:675px;top:453px;width:40px">Co<u>p</u>y</div>
<div class="btn" style="left:780px;top:453px;width:40px">Cl<u>o</u>se</div>

</body></html>
